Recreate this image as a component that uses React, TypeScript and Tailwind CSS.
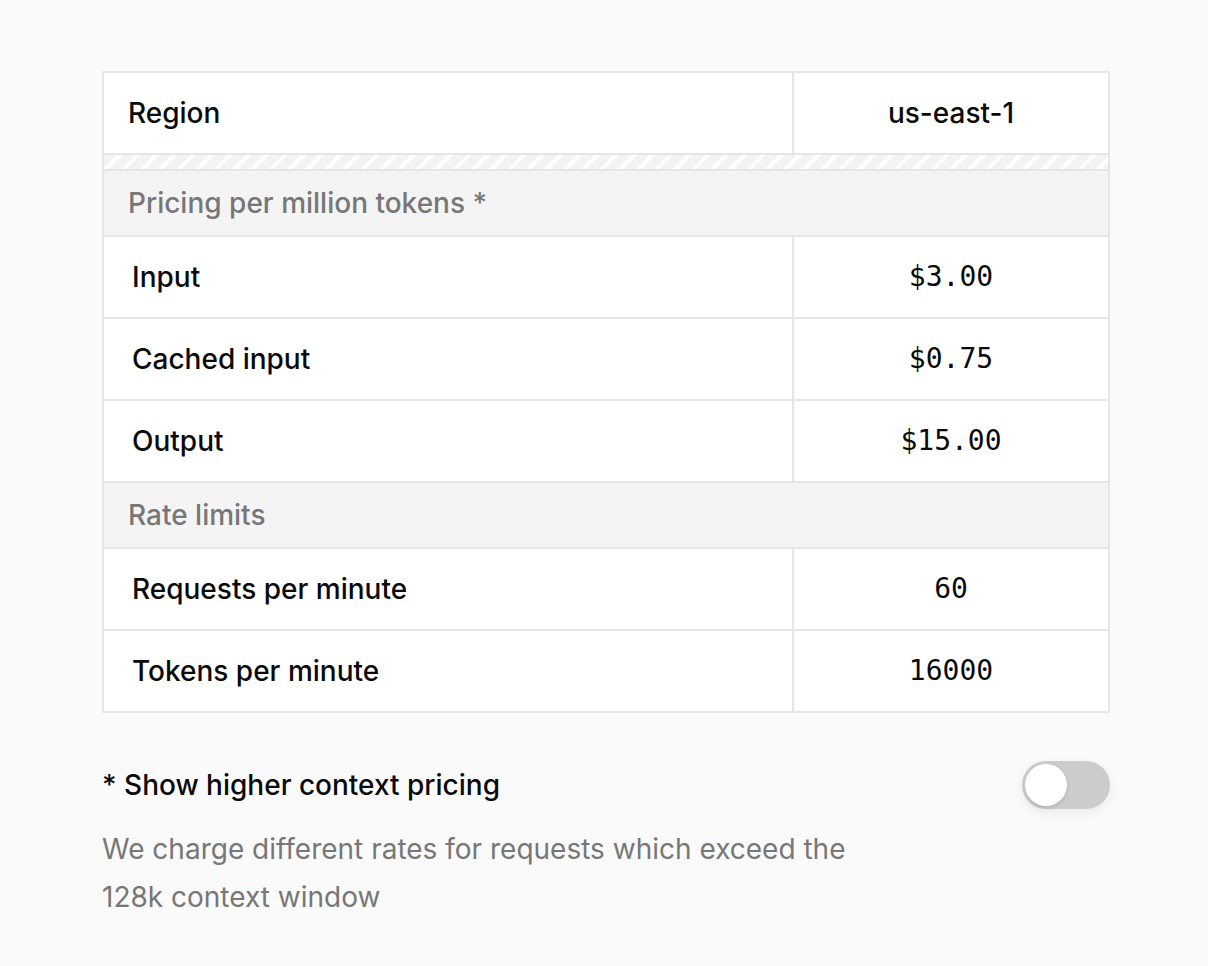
import React from "react";

const sans = "font-['Inter','Noto_Sans',sans-serif]";
const mono = "font-['DejaVu_Sans_Mono','Liberation_Mono',monospace]";

function Row({ label, value, last }: { label: string; value: string; last?: boolean }) {
  return (
    <div className={`flex ${last ? "h-[80px]" : "h-[82px] border-b-2 border-[#e6e6e6]"}`}>
      <div className="w-[690px] border-r-2 border-[#e6e6e6] flex items-center pl-[28px] text-[28px] font-medium text-[#0a0a0a]">
        {label}
      </div>
      <div className={`flex-1 flex items-center justify-center text-[28px] text-[#0a0a0a] ${mono}`}>{value}</div>
    </div>
  );
}

function Section({ label }: { label: string }) {
  return (
    <div className="h-[66px] border-b-2 border-[#e6e6e6] bg-[#f4f4f4] flex items-center pl-[24px] text-[28px] font-medium text-[#777777]">
      {label}
    </div>
  );
}

export default function App() {
  return (
    <div className={`min-h-[966px] bg-[#fafafa] pt-[71px] pl-[102px] ${sans}`}>
      <div className="w-[1008px] border-2 border-[#e6e6e6] bg-white">
        <div className="flex h-[82px] border-b-2 border-[#e6e6e6]">
          <div className="w-[690px] border-r-2 border-[#e6e6e6] flex items-center pl-[24px] text-[28px] font-medium text-[#0a0a0a]">
            Region
          </div>
          <div className="flex-1 flex items-center justify-center text-[28px] font-medium text-[#0a0a0a]">us-east-1</div>
        </div>
        <div className="h-[16px] border-b-2 border-[#e6e6e6] bg-[repeating-linear-gradient(135deg,#f3f3f3_0px,#f3f3f3_9px,#ffffff_9px,#ffffff_13px)]" />
        <Section label="Pricing per million tokens *" />
        <Row label="Input" value="$3.00" />
        <Row label="Cached input" value="$0.75" />
        <Row label="Output" value="$15.00" />
        <Section label="Rate limits" />
        <Row label="Requests per minute" value="60" />
        <Row label="Tokens per minute" value="16000" last />
      </div>
      <div className="w-[1008px] mt-[48px] flex items-center justify-between h-[48px]">
        <div className="text-[28px] font-medium text-[#0a0a0a]">* Show higher context pricing</div>
        <div className="w-[88px] h-[48px] rounded-full bg-[#cccccc] p-[3px] flex items-center shadow-[0_4px_12px_rgba(0,0,0,0.06)]">
          <div className="w-[42px] h-[42px] rounded-full bg-white shadow-[0_2px_4px_rgba(0,0,0,0.12)]" />
        </div>
      </div>
      <div className="mt-[16px] w-[760px] text-[28px] leading-[48px] text-[#777777]">
        We charge different rates for requests which exceed the 128k context window
      </div>
    </div>
  );
}
